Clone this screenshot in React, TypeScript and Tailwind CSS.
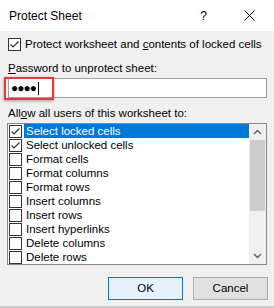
import React from 'react';

const permissions = [
  { label: 'Select locked cells', checked: true, selected: true },
  { label: 'Select unlocked cells', checked: true },
  { label: 'Format cells' },
  { label: 'Format columns' },
  { label: 'Format rows' },
  { label: 'Insert columns' },
  { label: 'Insert rows' },
  { label: 'Insert hyperlinks' },
  { label: 'Delete columns' },
  { label: 'Delete rows' },
];

const Checkbox: React.FC<{ checked?: boolean }> = ({ checked }) => (
  <div className="w-[13px] h-[13px] shrink-0 border border-[#333333] bg-white flex items-center justify-center">
    {checked && (
      <svg width="11" height="11" viewBox="0 0 11 11" fill="none">
        <path d="M1.5 5.5 L4 8 L9.5 2.5" stroke="#333333" strokeWidth="1.2" />
      </svg>
    )}
  </div>
);

const Chevron: React.FC<{ up?: boolean }> = ({ up }) => (
  <svg width="9" height="6" viewBox="0 0 9 6" fill="none">
    <path
      d={up ? 'M1 5 L4.5 1.5 L8 5' : 'M1 1 L4.5 4.5 L8 1'}
      stroke="#606060"
      strokeWidth="1.4"
    />
  </svg>
);

export default function App() {
  return (
    <div
      className="w-[274px] h-[308px] bg-[#f0f0f0] border-b-2 border-[#cccccc] text-[11.5px] text-black flex flex-col"
      style={{ fontFamily: '"Liberation Sans", Arial, sans-serif' }}
    >
      {/* title bar */}
      <div className="h-[31px] shrink-0 bg-white flex items-center pl-[9px] pr-[19px]">
        <span className="flex-1 text-[12px]">Protect Sheet</span>
        <span className="mr-[37px] text-[12px]">?</span>
        <svg width="11" height="11" viewBox="0 0 11 11" fill="none">
          <path d="M0.5 0.5 L10.5 10.5 M10.5 0.5 L0.5 10.5" stroke="#000" strokeWidth="1" />
        </svg>
      </div>

      <div className="flex items-center gap-[4px] mt-[7px] ml-[8px] h-[13px] leading-[13px]">
        <Checkbox checked />
        <span className="whitespace-nowrap">
          Protect worksheet and <u>c</u>ontents of locked cells
        </span>
      </div>

      <div className="mt-[9px] ml-[8px] h-[16px] leading-[16px]">
        <u>P</u>assword to unprotect sheet:
      </div>

      <div className="relative mt-[2px] ml-[8px] w-[259px] h-[20px] bg-white border border-[#a0a0a0] flex items-center pl-[2px]">
        <span className="text-[12px] tracking-[-1px] leading-none">●●●●</span>
        <span className="w-px h-[13px] bg-black ml-[2px]" />
        <div className="absolute left-[-5px] top-[-2px] w-[50px] h-[23px] border-2 border-[#e23a3f] shadow-[0_1px_3px_rgba(0,0,0,0.35)]" />
      </div>

      <div className="mt-[7px] ml-[8px] h-[16px] leading-[16px]">
        All<u>o</u>w all users of this worksheet to:
      </div>

      <div className="mt-[2px] ml-[7px] w-[260px] h-[142px] bg-white border border-[#828790] flex">
        <div className="flex-1 flex flex-col">
          {permissions.map((p) => (
            <div key={p.label} className="h-[14px] flex items-center pl-[1px]">
              <Checkbox checked={p.checked} />
              <span
                className={`ml-[2px] pl-[2px] h-[14px] leading-[14px] flex-1 whitespace-nowrap ${
                  p.selected ? 'bg-[#0078d7] text-white' : ''
                }`}
              >
                {p.label}
              </span>
            </div>
          ))}
        </div>
        <div className="w-[17px] bg-[#f0f0f0] flex flex-col items-center">
          <div className="h-[16px] flex items-center justify-center">
            <Chevron up />
          </div>
          <div className="w-[15px] h-[71px] bg-[#cdcdcd]" />
          <div className="flex-1" />
          <div className="h-[16px] flex items-center justify-center">
            <Chevron />
          </div>
        </div>
      </div>

      <div className="mt-[12px] ml-[108px] flex gap-[10px]">
        <button className="w-[75px] h-[23px] bg-[#e5f1fb] border border-[#0078d7]">OK</button>
        <button className="w-[75px] h-[23px] bg-[#e1e1e1] border border-[#adadad]">Cancel</button>
      </div>
    </div>
  );
}
